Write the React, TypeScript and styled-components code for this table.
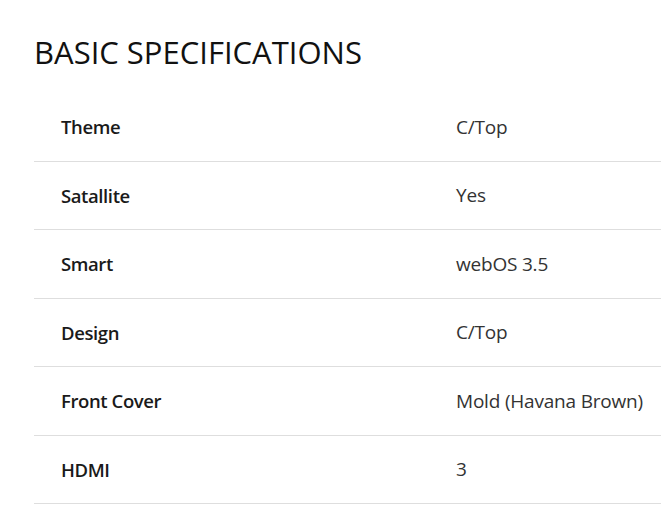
import React from "react";
import styled, { createGlobalStyle } from "styled-components";

const Global = createGlobalStyle`
  html, body { margin: 0; padding: 0; background: #fff; }
  body { font-family: "Open Sans", "Noto Sans", sans-serif; }
`;

const Page = styled.div`
  padding: 32px 0 0 34px;
`;

const Title = styled.h2`
  margin: 0;
  font-size: 31px;
  font-weight: 400;
  line-height: 40px;
  color: #111;
  letter-spacing: 0;
`;

const Table = styled.div`
  margin-top: 21px;
  display: flex;
  flex-direction: column;
`;

const Row = styled.div`
  display: grid;
  grid-template-columns: 395px 1fr;
  align-items: center;
  height: 68.5px;
  box-sizing: border-box;
  border-bottom: 1px solid #dedede;
  padding-left: 27px;
`;

const Label = styled.div`
  font-size: 18.5px;
  font-weight: 600;
  color: #1a1a1a;
  letter-spacing: -0.4px;
`;

const Value = styled.div`
  font-size: 19px;
  font-weight: 400;
  color: #333;
  letter-spacing: -0.2px;
`;

const specs = [
  ["Theme", "C/Top"],
  ["Satallite", "Yes"],
  ["Smart", "webOS 3.5"],
  ["Design", "C/Top"],
  ["Front Cover", "Mold (Havana Brown)"],
  ["HDMI", "3"],
];

export default function App() {
  return (
    <Page>
      <Global />
      <Title>BASIC SPECIFICATIONS</Title>
      <Table>
        {specs.map(([k, v]) => (
          <Row key={k}>
            <Label>{k}</Label>
            <Value>{v}</Value>
          </Row>
        ))}
      </Table>
    </Page>
  );
}
